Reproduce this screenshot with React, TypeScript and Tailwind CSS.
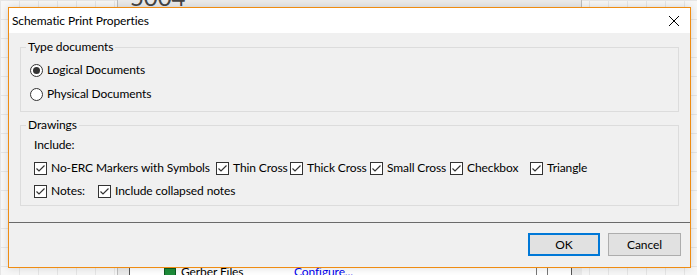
import React, { useState } from "react";

const font = { fontFamily: 'Lato, "Noto Sans", Arial, sans-serif' };

const Radio = ({ checked }: { checked: boolean }) => (
  <span className="w-[13px] h-[13px] rounded-full border border-[#333] bg-white flex items-center justify-center shrink-0">
    {checked && <span className="w-[7px] h-[7px] rounded-full bg-[#333]" />}
  </span>
);

const Check = ({ checked }: { checked: boolean }) => (
  <span className="w-[13px] h-[13px] border border-[#333] bg-white flex items-center justify-center shrink-0">
    {checked && (
      <svg width="11" height="11" viewBox="0 0 11 11">
        <path d="M1.5 5.5 L4 8 L9.5 2.5" fill="none" stroke="#333" strokeWidth="1.2" />
      </svg>
    )}
  </span>
);

const CheckItem = ({ label, w }: { label: string; w: string }) => {
  const [on, setOn] = useState(true);
  return (
    <label className={`flex items-center gap-[4px] cursor-default ${w}`} onClick={() => setOn(!on)}>
      <Check checked={on} />
      <span className="whitespace-nowrap">{label}</span>
    </label>
  );
};

const App = () => {
  const [doc, setDoc] = useState("logical");

  return (
    <div
      className="relative w-[697px] h-[275px] overflow-hidden bg-[#f7f7f7] bg-[linear-gradient(#e6e6e6_1px,transparent_1px),linear-gradient(90deg,#e6e6e6_1px,transparent_1px)] bg-[size:19px_19px] text-[12px] tracking-[-0.1px] text-black"
      style={font}
    >
      {/* background window peeking out */}
      <div className="absolute left-[117px] top-0 w-[465px] h-[8px] overflow-hidden bg-[#ebebeb] border-l border-r border-[#bdbdbd]">
        <span className="absolute left-[12px] -top-[15px] text-[24px] leading-[24px] text-[#444]">5004</span>
      </div>
      <div className="absolute left-[117px] top-[262px] w-[465px] h-[20px] bg-[#ebebeb] border-l border-[#bdbdbd]">
        <div className="ml-[11px] mr-[10px] h-full bg-white border-l border-r border-[#555] flex items-center text-[12px]">
          <span className="ml-[34px] w-[12px] h-[8px] bg-[#1e8c3a] border border-[#0c5a20]" />
          <span className="ml-[5px] w-[113px]">Gerber Files</span>
          <span className="text-[#0000ee] underline">Configure...</span>
          <span className="ml-auto mr-[23px] w-[12px] h-[12px] border border-[#777] bg-white" />
        </div>
      </div>

      {/* dialog */}
      <div className="absolute left-[8px] top-[7px] w-[683px] h-[261px] border border-[#ef8c12] bg-[#f0f0f0] flex flex-col shadow-[0_0_8px_rgba(0,0,0,0.15)]">
        <div className="h-[25px] bg-white flex items-center pl-[3px] pr-[10px] shrink-0">
          <span className="flex-1">Schematic Print Properties</span>
          <svg width="12" height="12" viewBox="0 0 12 12">
            <path d="M1 1 L11 11 M11 1 L1 11" stroke="#000" strokeWidth="1" />
          </svg>
        </div>

        <div className="flex-1 px-[11px] pt-[6px] flex flex-col gap-[5px]">
          <fieldset className="border border-[#dcdcdc] h-[73px] m-0 px-[9px] pt-0">
            <legend className="px-[2px] ml-[-4px] leading-[16px]">Type documents</legend>
            <div className="flex flex-col pt-[3px]">
              <label className="flex items-center gap-[4px] h-[24px]" onClick={() => setDoc("logical")}>
                <Radio checked={doc === "logical"} />
                <span>Logical Documents</span>
              </label>
              <label className="flex items-center gap-[4px] h-[24px]" onClick={() => setDoc("physical")}>
                <Radio checked={doc === "physical"} />
                <span>Physical Documents</span>
              </label>
            </div>
          </fieldset>

          <fieldset className="border border-[#dcdcdc] h-[89px] m-0 pl-[13px] pt-0">
            <legend className="px-[2px] ml-[-8px] leading-[16px]">Drawings</legend>
            <div className="pt-[4px] leading-[16px]">Include:</div>
            <div className="flex items-center mt-[6px]">
              <CheckItem label="No-ERC Markers with Symbols" w="w-[182px]" />
              <CheckItem label="Thin Cross" w="w-[74px]" />
              <CheckItem label="Thick Cross" w="w-[80px]" />
              <CheckItem label="Small Cross" w="w-[80px]" />
              <CheckItem label="Checkbox" w="w-[80px]" />
              <CheckItem label="Triangle" w="w-[80px]" />
            </div>
            <div className="flex items-center mt-[5px]">
              <CheckItem label="Notes:" w="w-[64px]" />
              <CheckItem label="Include collapsed notes" w="w-[160px]" />
            </div>
          </fieldset>
        </div>

        <div className="h-[45px] shrink-0 border-t border-[#6a6a6a] flex items-start justify-end gap-[8px] pt-[10px] pr-[9px]">
          <button className="w-[72px] h-[23px] bg-[#e1e1e1] border-2 border-[#0078d7] leading-none">OK</button>
          <button className="w-[73px] h-[23px] bg-[#e1e1e1] border border-[#adadad] leading-none">Cancel</button>
        </div>
      </div>
    </div>
  );
};

export default App;
